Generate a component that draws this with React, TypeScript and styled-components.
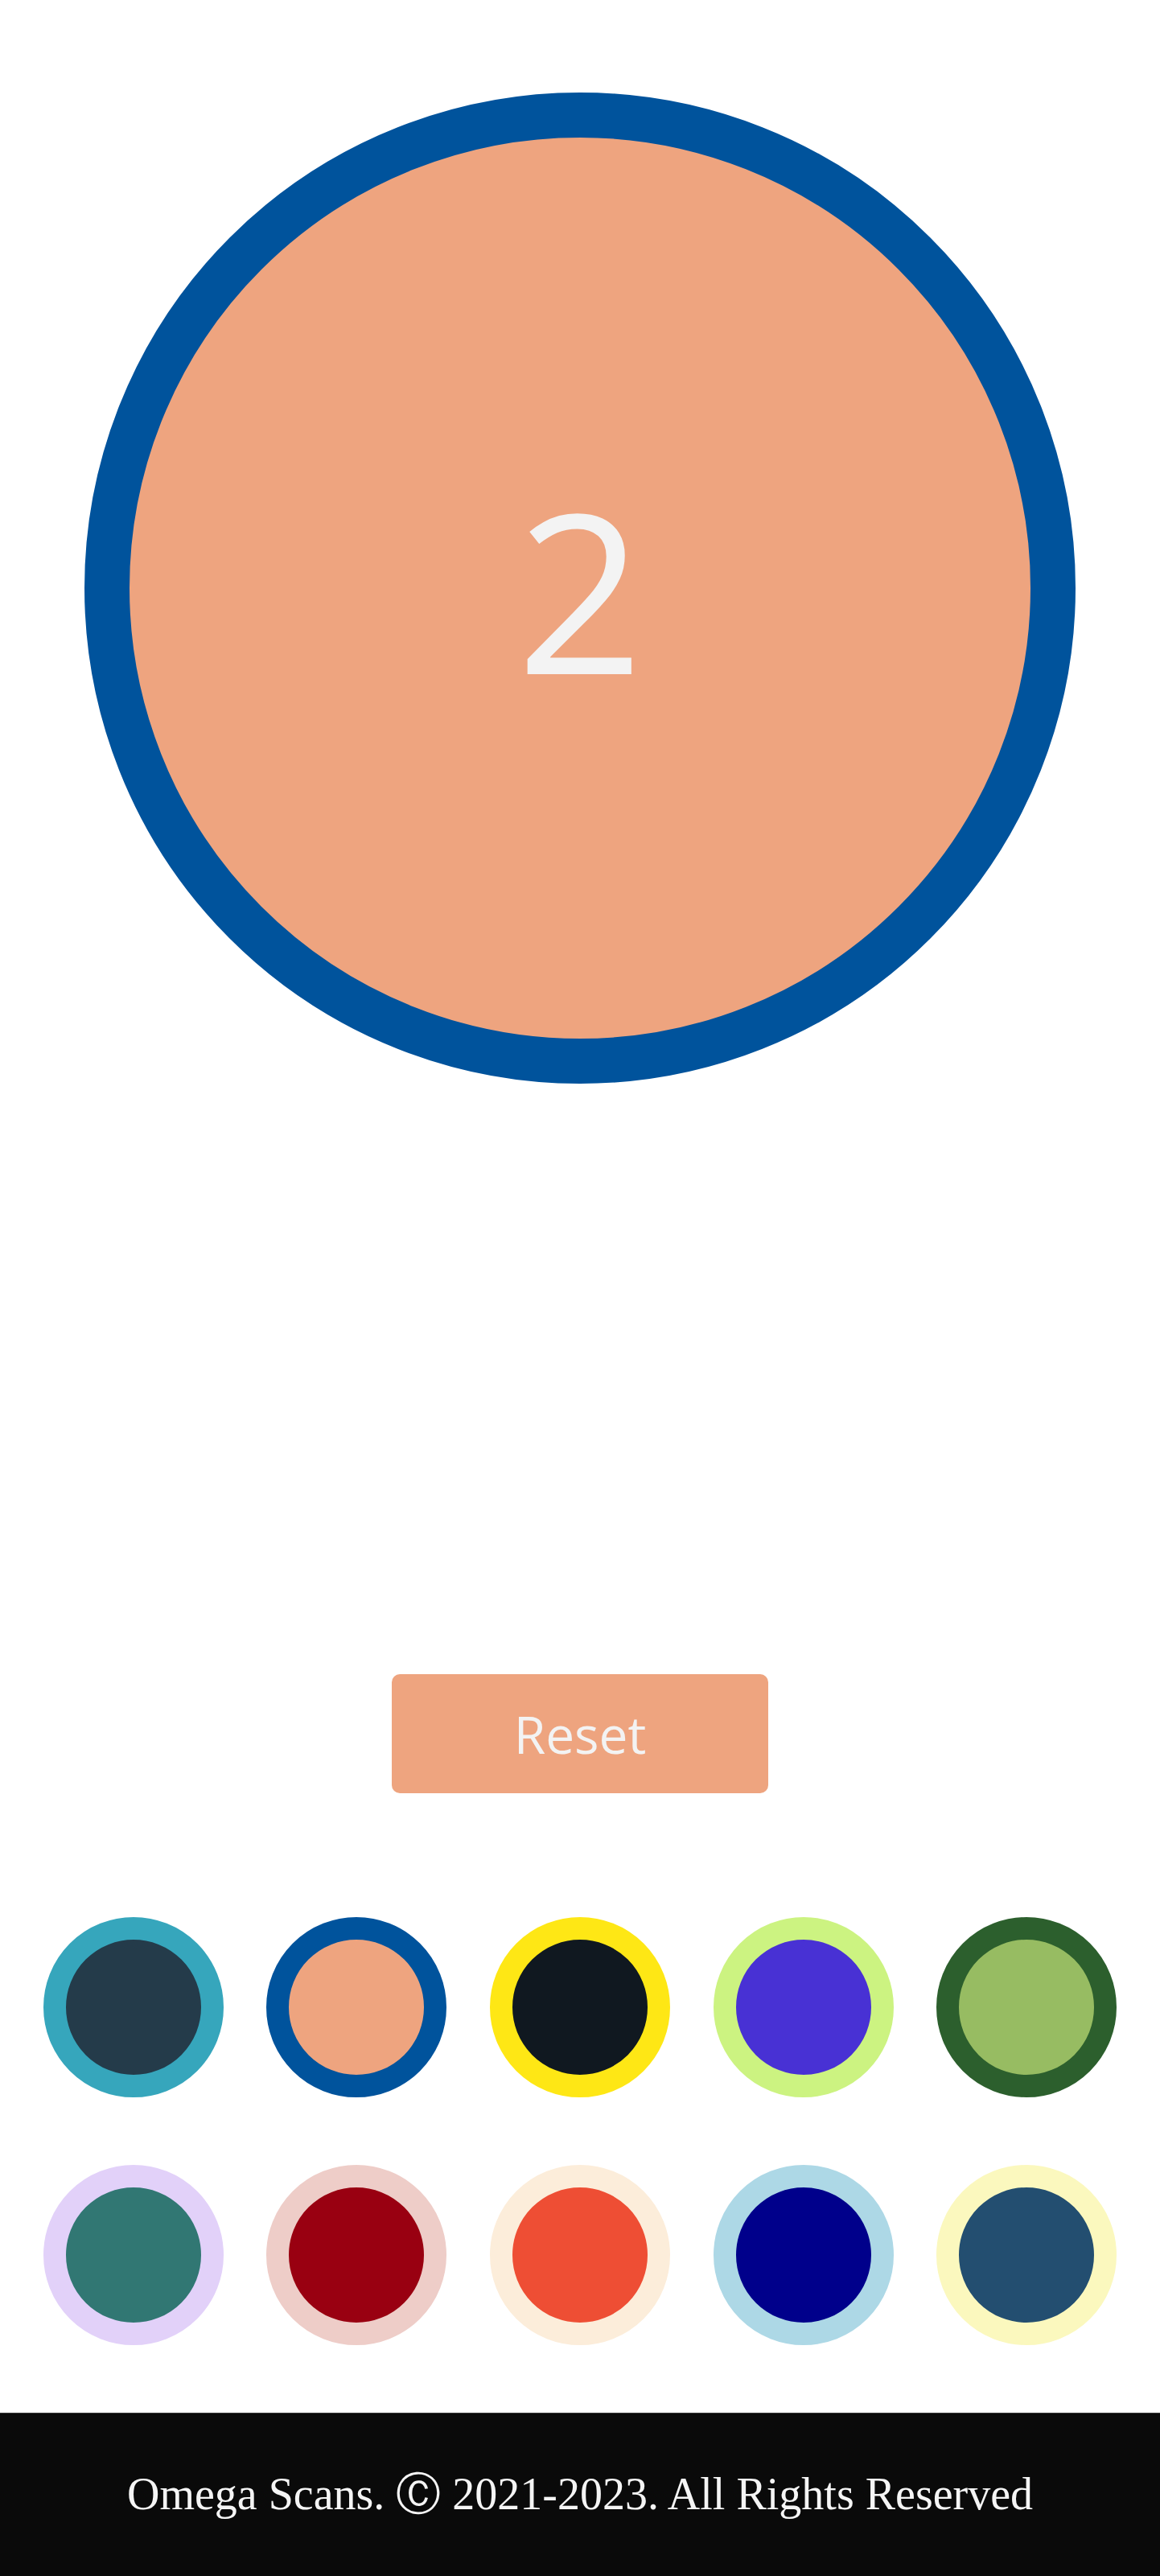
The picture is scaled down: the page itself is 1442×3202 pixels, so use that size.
import React from "react";
import styled, { createGlobalStyle } from "styled-components";

const GlobalStyle = createGlobalStyle`
  html, body {
    margin: 0;
    padding: 0;
    background: #ffffff;
  }
  * { box-sizing: border-box; }
`;

const Page = styled.div`
  display: flex;
  flex-direction: column;
  align-items: stretch;
  min-height: 3202px;
  width: 100%;
`;

const Main = styled.main`
  flex: 1;
  display: flex;
  flex-direction: column;
  align-items: center;
  padding-top: 115px;
`;

const Counter = styled.div<{ $ring: string; $fill: string }>`
  width: 1232px;
  height: 1232px;
  border-radius: 50%;
  border: 56px solid ${(p) => p.$ring};
  background: ${(p) => p.$fill};
  display: flex;
  align-items: center;
  justify-content: center;
`;

const Count = styled.span`
  font-family: "Open Sans", "Noto Sans", sans-serif;
  font-size: 276px;
  line-height: 1;
  color: #f3f3f3;
  font-weight: 500;
`;

const ResetButton = styled.button<{ $bg: string }>`
  margin-top: 734px;
  width: 468px;
  height: 148px;
  border: none;
  border-radius: 10px;
  background: ${(p) => p.$bg};
  color: #f3f3f3;
  font-family: "Open Sans", "Noto Sans", sans-serif;
  font-size: 64px;
  font-weight: 500;
  cursor: pointer;
  display: flex;
  align-items: center;
  justify-content: center;
`;

const Palette = styled.div`
  margin-top: 154px;
  width: 100%;
  display: flex;
  flex-direction: column;
  gap: 84px;
  padding-bottom: 84px;
`;

const PaletteRow = styled.div`
  display: flex;
  justify-content: space-evenly;
`;

const Swatch = styled.button<{ $ring: string; $fill: string }>`
  width: 224px;
  height: 224px;
  border-radius: 50%;
  border: 28px solid ${(p) => p.$ring};
  background: ${(p) => p.$fill};
  padding: 0;
  cursor: pointer;
`;

const Footer = styled.footer`
  height: 203px;
  background: #0a0a0a;
  border-top: 1px solid #3a3a3a;
  display: flex;
  align-items: center;
  justify-content: center;
`;

const FooterText = styled.p`
  margin: 0;
  color: #f5f5f5;
  font-family: "Liberation Serif", "Times New Roman", serif;
  font-size: 56px;
`;

const palettes: { ring: string; fill: string }[][] = [
  [
    { ring: "#36A6BC", fill: "#243B4A" },
    { ring: "#00539C", fill: "#EEA47F" },
    { ring: "#FEE715", fill: "#101820" },
    { ring: "#CCF381", fill: "#4831D4" },
    { ring: "#2C5F2D", fill: "#97BC62" },
  ],
  [
    { ring: "#E2D1F9", fill: "#317773" },
    { ring: "#EECDC8", fill: "#990011" },
    { ring: "#FCEDDA", fill: "#EE4E34" },
    { ring: "#ADD8E6", fill: "#00008B" },
    { ring: "#FBF8BE", fill: "#234E70" },
  ],
];

export default function App() {
  const [count, setCount] = React.useState(2);
  const [theme, setTheme] = React.useState({ ring: "#00539C", fill: "#EEA47F" });
  return (
    <>
      <GlobalStyle />
      <Page>
        <Main>
          <Counter $ring={theme.ring} $fill={theme.fill} onClick={() => setCount(count + 1)}>
            <Count>{count}</Count>
          </Counter>
          <ResetButton $bg={theme.fill} onClick={() => setCount(0)}>
            Reset
          </ResetButton>
          <Palette>
            {palettes.map((row, i) => (
              <PaletteRow key={i}>
                {row.map((p, j) => (
                  <Swatch key={j} $ring={p.ring} $fill={p.fill} onClick={() => setTheme(p)} />
                ))}
              </PaletteRow>
            ))}
          </Palette>
        </Main>
        <Footer>
          <FooterText>Omega Scans. Ⓒ 2021-2023. All Rights Reserved</FooterText>
        </Footer>
      </Page>
    </>
  );
}
